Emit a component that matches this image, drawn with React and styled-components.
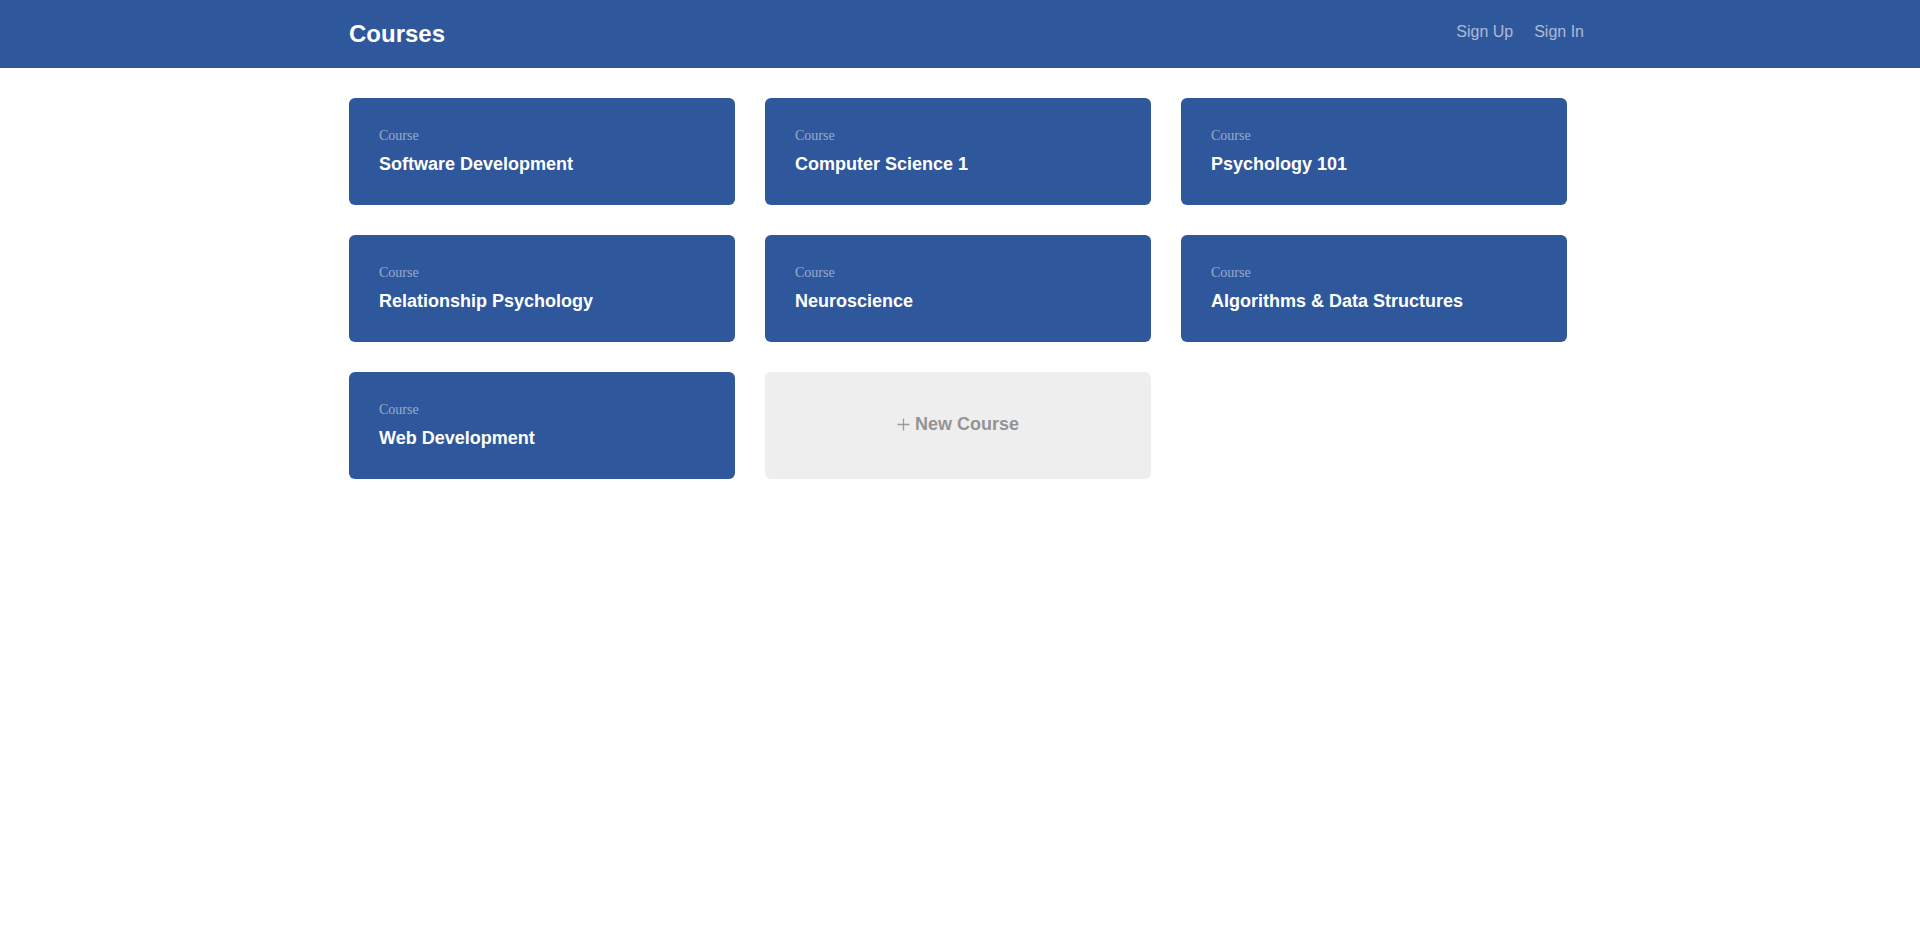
import styled, { createGlobalStyle } from "styled-components";

const GlobalStyle = createGlobalStyle`
  body {
    margin: 0;
    background: #fff;
    font-family: "Liberation Sans", Arial, sans-serif;
  }
`;

const Header = styled.header`
  height: 68px;
  background: #2f579b;
`;

const Container = styled.div`
  width: 1222px;
  margin: 0 auto;
`;

const HeaderInner = styled(Container)`
  height: 100%;
  display: flex;
  align-items: center;
  justify-content: space-between;
`;

const Title = styled.h1`
  margin: 0;
  font-size: 24px;
  font-weight: 700;
  color: #fff;
`;

const Nav = styled.nav`
  display: flex;
  gap: 21px;
  margin-right: -13px;
  margin-bottom: 5px;
`;

const NavLink = styled.a`
  font-size: 16px;
  color: rgba(255, 255, 255, 0.6);
  text-decoration: none;
  cursor: pointer;
`;

const Grid = styled(Container)`
  display: grid;
  grid-template-columns: repeat(3, 386px);
  gap: 30px;
  padding-top: 30px;
`;

const Card = styled.a`
  box-sizing: border-box;
  height: 107px;
  padding: ${(p) => (p.$add ? "30px" : "31px 30px 30px")};
  border-radius: 6px;
  background: ${(p) => (p.$add ? "#eeeeee" : "#2f579b")};
  display: flex;
  flex-direction: column;
  justify-content: ${(p) => (p.$add ? "center" : "flex-start")};
  align-items: ${(p) => (p.$add ? "center" : "flex-start")};
  text-decoration: none;
  cursor: pointer;
`;

const Label = styled.span`
  font-family: "Liberation Serif", "Times New Roman", serif;
  font-size: 14px;
  line-height: 1;
  color: rgba(255, 255, 255, 0.5);
`;

const CourseName = styled.h3`
  margin: 11px 0 0;
  font-size: 18px;
  font-weight: 700;
  color: #fff;
`;

const AddText = styled.span`
  display: flex;
  align-items: center;
  gap: 5px;
  margin-top: -2px;
  font-size: 18px;
  font-weight: 700;
  color: #949494;
`;

const courses = [
  "Software Development",
  "Computer Science 1",
  "Psychology 101",
  "Relationship Psychology",
  "Neuroscience",
  "Algorithms & Data Structures",
  "Web Development",
];

function PlusIcon() {
  return (
    <svg width="13" height="13" viewBox="0 0 13 13">
      <path d="M6.5 0.5v12M0.5 6.5h12" stroke="#9a9a9a" strokeWidth="1.3" fill="none" />
    </svg>
  );
}

export default function App() {
  return (
    <>
      <GlobalStyle />
      <Header>
        <HeaderInner>
          <Title>Courses</Title>
          <Nav>
            <NavLink>Sign Up</NavLink>
            <NavLink>Sign In</NavLink>
          </Nav>
        </HeaderInner>
      </Header>
      <Grid>
        {courses.map((name) => (
          <Card key={name}>
            <Label>Course</Label>
            <CourseName>{name}</CourseName>
          </Card>
        ))}
        <Card $add>
          <AddText>
            <PlusIcon />
            New Course
          </AddText>
        </Card>
      </Grid>
    </>
  );
}
